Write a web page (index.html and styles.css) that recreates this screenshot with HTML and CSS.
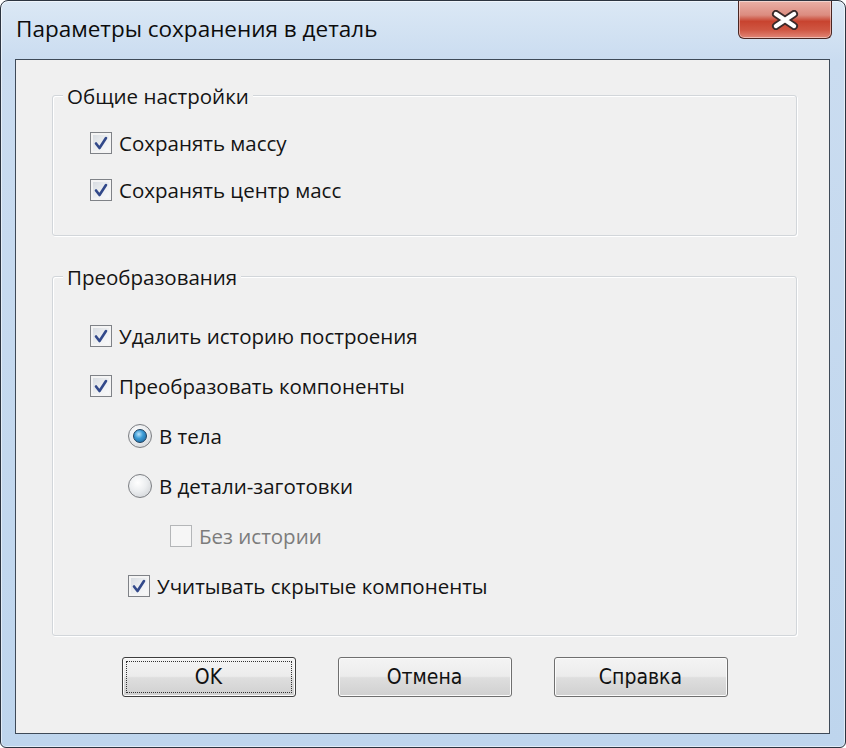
FILE: index.html
```html
<!DOCTYPE html>
<html lang="ru">
<head>
    <meta charset="UTF-8">
    <title>Параметры сохранения в деталь</title>
    <link rel="stylesheet" href="styles.css">
</head>
<body>
    <div class="window">
        <div class="titlebar">
            <div class="title">Параметры сохранения в деталь</div>
            <div class="close">
                <svg width="30" height="20" viewBox="0 0 30 20">
                    <path d="M6 4 L24 16 M24 4 L6 16" stroke="#3b2a2a" stroke-width="8" stroke-linecap="round"/>
                    <path d="M6 4 L24 16 M24 4 L6 16" stroke="#ffffff" stroke-width="4.5" stroke-linecap="round"/>
                </svg>
            </div>
        </div>

        <div class="client">
            <div class="group group-general">
                <div class="legend">Общие настройки</div>
                <div class="rows">
                    <div class="row">
                        <span class="check on"><svg viewBox="0 0 16 16"><path d="M3 8.5 L6.5 13 L13 3" /></svg></span>
                        Сохранять массу
                    </div>
                    <div class="row">
                        <span class="check on"><svg viewBox="0 0 16 16"><path d="M3 8.5 L6.5 13 L13 3" /></svg></span>
                        Сохранять центр масс
                    </div>
                </div>
            </div>

            <div class="group group-convert">
                <div class="legend">Преобразования</div>
                <div class="rows">
                    <div class="row">
                        <span class="check on"><svg viewBox="0 0 16 16"><path d="M3 8.5 L6.5 13 L13 3" /></svg></span>
                        Удалить историю построения
                    </div>
                    <div class="row">
                        <span class="check on"><svg viewBox="0 0 16 16"><path d="M3 8.5 L6.5 13 L13 3" /></svg></span>
                        Преобразовать компоненты
                    </div>
                    <div class="row level1">
                        <span class="radio on"></span>
                        В тела
                    </div>
                    <div class="row level1">
                        <span class="radio"></span>
                        В детали-заготовки
                    </div>
                    <div class="row level2 disabled">
                        <span class="check"></span>
                        Без истории
                    </div>
                    <div class="row level1">
                        <span class="check on"><svg viewBox="0 0 16 16"><path d="M3 8.5 L6.5 13 L13 3" /></svg></span>
                        Учитывать скрытые компоненты
                    </div>
                </div>
            </div>

            <div class="buttons">
                <div class="btn default"><span>OK</span></div>
                <div class="btn"><span>Отмена</span></div>
                <div class="btn"><span>Справка</span></div>
            </div>
        </div>
    </div>
</body>
</html>
```

FILE: styles.css
```css
html, body {
    margin: 0;
    padding: 0;
    background: #ffffff;
    overflow: hidden;
}
.window {
    width: 846px;
    height: 748px;
    box-sizing: border-box;
    border: 1px solid #2c3440;
    border-radius: 8px 8px 6px 6px;
    background: linear-gradient(to bottom, #dbe8f5 0, #cadcf0 60px, #bed5ed 100%);
    box-shadow: inset 0 0 0 1px rgba(255, 255, 255, 0.55);
    display: flex;
    flex-direction: column;
    font-family: "Open Sans", "Noto Sans", sans-serif;
    color: #141414;
}
.titlebar {
    height: 58px;
    flex: none;
    display: flex;
    justify-content: space-between;
    align-items: flex-start;
}
.title {
    margin: 13px 0 0 15px;
    font-size: 22.5px;
    line-height: 30px;
    color: #0c0c0c;
}
.close {
    width: 94px;
    height: 38px;
    margin-right: 13px;
    box-sizing: border-box;
    border: 1px solid #4a2622;
    border-top: none;
    border-radius: 0 0 6px 6px;
    background: linear-gradient(to bottom, #eab0a6 0%, #dc8c80 38%, #c8432f 55%, #cf5642 78%, #e18677 100%);
    box-shadow: inset 0 0 0 1px rgba(255, 255, 255, 0.45);
    display: flex;
    align-items: center;
    justify-content: center;
}
.client {
    flex: 1;
    margin: 0 15px 13px 14px;
    border: 1px solid #3e4a58;
    background: #f0f0f0;
    padding: 35px 32px 0 36px;
}
.group {
    border: 1px solid #d2d6da;
    border-radius: 3px;
    box-shadow: inset 1px 1px 0 #fff, 1px 1px 0 #fff;
    padding: 0 0 33px 37px;
}
.group-convert {
    margin-top: 40px;
    padding-bottom: 37px;
}
.legend {
    width: fit-content;
    height: 24px;
    line-height: 24px;
    margin: -12px 0 0 -27px;
    padding: 0 4px;
    background: #f0f0f0;
    font-size: 20.5px;
}
.rows {
    display: flex;
    flex-direction: column;
    gap: 23px;
    margin-top: 23px;
}
.group-convert .rows {
    gap: 26px;
    margin-top: 35px;
}
.row {
    height: 24px;
    display: flex;
    align-items: center;
    gap: 7px;
    font-size: 20.5px;
    white-space: nowrap;
}
.level1 {
    padding-left: 38px;
}
.level2 {
    padding-left: 80px;
}
.disabled {
    color: #7c7c7c;
}
.check {
    width: 22px;
    height: 22px;
    box-sizing: border-box;
    border: 1px solid #7f8287;
    background: linear-gradient(135deg, #d3d8de 0%, #eef0f2 55%, #fbfbfb 100%);
    box-shadow: inset 0 0 0 2px #f4f4f4;
    display: flex;
    align-items: center;
    justify-content: center;
}
.check svg {
    width: 16px;
    height: 16px;
}
.check path {
    fill: none;
    stroke: #32498a;
    stroke-width: 2.6;
    stroke-linecap: round;
    stroke-linejoin: round;
}
.disabled .check {
    border-color: #b4b6b8;
    background: #f6f6f6;
    box-shadow: none;
}
.radio {
    width: 24px;
    height: 24px;
    box-sizing: border-box;
    border-radius: 50%;
    border: 1px solid #7c7e82;
    background: radial-gradient(circle at 40% 35%, #ffffff 0%, #eceef0 45%, #c9ccd0 100%);
    display: flex;
    align-items: center;
    justify-content: center;
}
.radio.on::after {
    content: "";
    width: 12px;
    height: 12px;
    border-radius: 50%;
    border: 1px solid #1d3f5e;
    background: radial-gradient(circle at 40% 35%, #b9e3fb 0%, #3a9bd6 40%, #1a5f95 100%);
}
.buttons {
    margin-top: 21px;
    padding-left: 0;
    display: flex;
    justify-content: center;
    gap: 42px;
}
.btn {
    width: 174px;
    height: 40px;
    box-sizing: border-box;
    border: 1px solid #6f6f6f;
    border-radius: 3px;
    background: linear-gradient(to bottom, #f4f4f4 0%, #ececec 48%, #dedede 52%, #d0d0d0 100%);
    box-shadow: inset 0 0 0 1px #fbfbfb;
    display: flex;
    align-items: center;
    justify-content: center;
    font-family: "DejaVu Sans Condensed", "DejaVu Sans", sans-serif;
    font-stretch: condensed;
    font-size: 21px;
    color: #111;
}
.btn.default {
    border-color: #3d3d3d;
    outline: 1px dotted #333;
    outline-offset: -5px;
}
```
